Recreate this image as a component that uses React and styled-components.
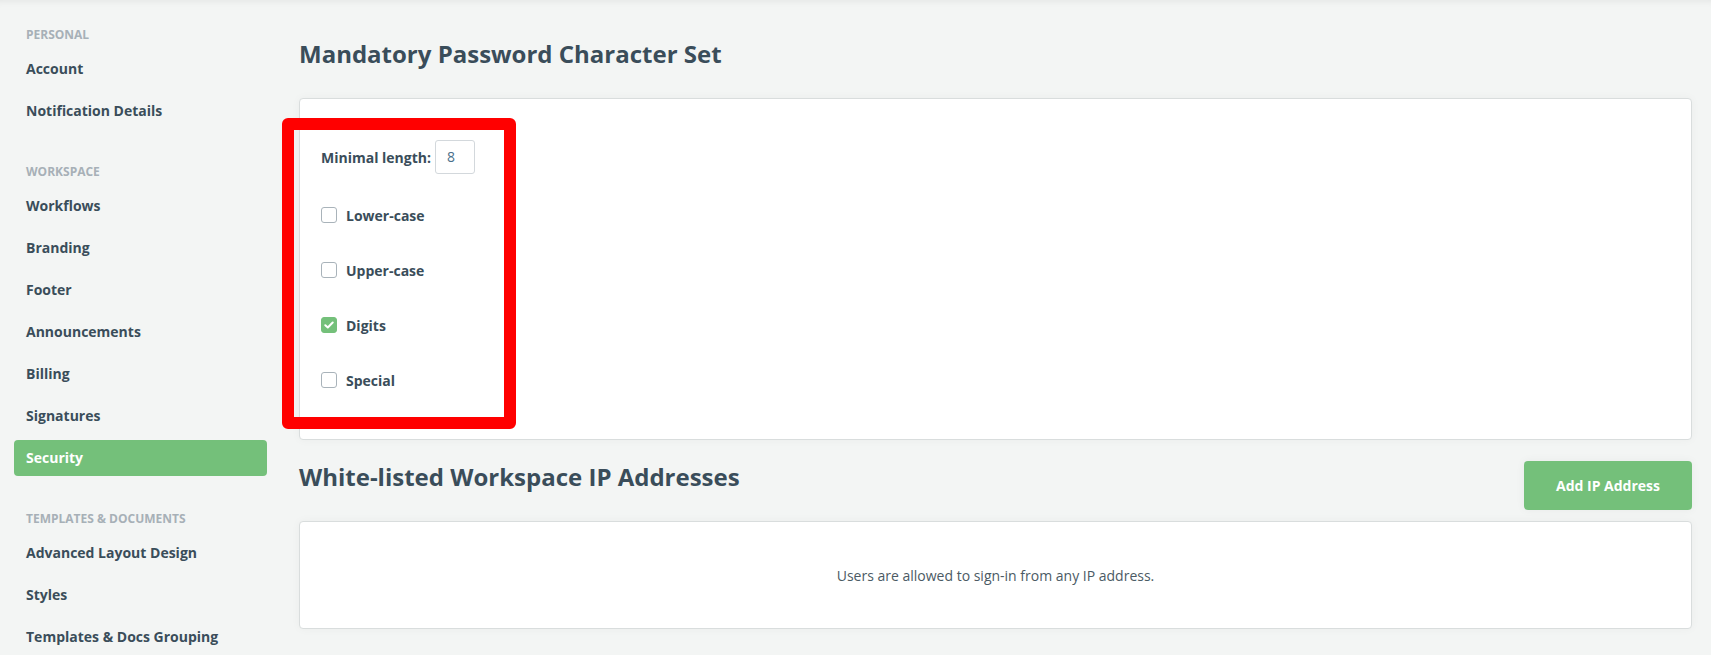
import React from "react";
import styled, { createGlobalStyle } from "styled-components";

const GlobalStyle = createGlobalStyle`
  html, body { margin: 0; padding: 0; background: #f3f5f4; }
  body { font-family: "Open Sans", "Noto Sans", sans-serif; color: #3c4f5c; }
  * { box-sizing: border-box; }
`;

const Page = styled.div`
  position: relative;
  display: flex;
  width: 1711px;
  height: 655px;
  overflow: hidden;
  background: #f3f5f4;
  box-shadow: inset 0 7px 7px -6px rgba(0, 0, 0, 0.07);
`;

const Sidebar = styled.nav`
  flex: 0 0 281px;
  padding: 27px 14px 0 14px;
  display: flex;
  flex-direction: column;
  gap: 35px;
`;

const Section = styled.div`
  display: flex;
  flex-direction: column;
`;

const SectionTitle = styled.div`
  height: 16px;
  line-height: 16px;
  padding-left: 12px;
  margin-bottom: 8px;
  font-size: 12px;
  font-weight: 700;
  text-transform: uppercase;
  color: #a7b0b7;
  white-space: nowrap;
`;

const Items = styled.div`
  display: flex;
  flex-direction: column;
  gap: 6px;
`;

const Item = styled.div`
  height: 36px;
  line-height: 36px;
  padding-left: 12px;
  font-size: 14px;
  font-weight: 700;
  border-radius: 4px;
  white-space: nowrap;
  color: ${(p) => (p.$active ? "#ffffff" : "#3a4d5a")};
  background: ${(p) => (p.$active ? "#74c07a" : "transparent")};
`;

const Main = styled.main`
  flex: 1;
  padding: 37px 19px 0 18px;
  display: flex;
  flex-direction: column;
`;

const Heading = styled.h2`
  margin: 0;
  font-size: 24px;
  line-height: 33px;
  font-weight: 700;
  color: #3a4d5a;
  white-space: nowrap;
`;

const Card = styled.div`
  background: #ffffff;
  border: 1px solid #d9dddd;
  border-radius: 4px;
  box-shadow: 0 0 10px rgba(0, 0, 0, 0.04);
`;

const PasswordCard = styled(Card)`
  margin-top: 28px;
  height: 342px;
  padding: 41px 20px 0 21px;
  display: flex;
  flex-direction: column;
`;

const LengthRow = styled.div`
  display: flex;
  align-items: center;
  height: 34px;
  gap: 4px;
`;

const Label = styled.label`
  font-size: 14px;
  font-weight: 700;
  color: #3a4d5a;
  white-space: nowrap;
`;

const NumberBox = styled.div`
  width: 40px;
  height: 34px;
  border: 1px solid #d3d8dc;
  border-radius: 3px;
  padding-left: 11px;
  line-height: 32px;
  font-size: 14px;
  color: #4a6f8a;
`;

const CheckList = styled.div`
  margin-top: 31px;
  display: flex;
  flex-direction: column;
  gap: 35px;
`;

const CheckRow = styled.div`
  display: flex;
  align-items: center;
  height: 20px;
  gap: 9px;
`;

const Box = styled.span`
  width: 16px;
  height: 16px;
  border-radius: 3px;
  display: inline-flex;
  align-items: center;
  justify-content: center;
  border: 1px solid ${(p) => (p.$checked ? "#74c07a" : "#a9b3ba")};
  background: ${(p) => (p.$checked ? "#74c07a" : "#ffffff")};
`;

const SectionHeader = styled.div`
  margin-top: 20px;
  display: flex;
  justify-content: space-between;
  align-items: flex-start;
`;

const Button = styled.button`
  width: 168px;
  height: 49px;
  margin-top: 1px;
  border: none;
  border-radius: 4px;
  background: #74c07a;
  color: #ffffff;
  font-family: "Open Sans", "Noto Sans", sans-serif;
  font-size: 14px;
  font-weight: 700;
  box-shadow: 0 0 10px rgba(0, 0, 0, 0.05);
  cursor: pointer;
`;

const IpCard = styled(Card)`
  margin-top: 11px;
  height: 108px;
  display: flex;
  align-items: center;
  justify-content: center;
  font-size: 14px;
  color: #4b5a64;
`;

const Annotation = styled.div`
  position: absolute;
  left: 282px;
  top: 118px;
  width: 234px;
  height: 311px;
  border: 12px solid #ff0000;
  border-radius: 6px;
  pointer-events: none;
`;

const Check = () => (
  <svg width="10" height="8" viewBox="0 0 10 8">
    <path d="M1.3 4.2 L3.8 6.5 L8.7 1.5" fill="none" stroke="#ffffff" strokeWidth="2" strokeLinecap="round" strokeLinejoin="round" />
  </svg>
);

const nav = [
  { title: "Personal", items: ["Account", "Notification Details"] },
  {
    title: "Workspace",
    items: ["Workflows", "Branding", "Footer", "Announcements", "Billing", "Signatures", "Security"],
  },
  { title: "Templates & Documents", items: ["Advanced Layout Design", "Styles", "Templates & Docs Grouping"] },
];

const checks = [
  { label: "Lower-case", checked: false },
  { label: "Upper-case", checked: false },
  { label: "Digits", checked: true },
  { label: "Special", checked: false },
];

export default function App() {
  return (
    <>
      <GlobalStyle />
      <Page>
        <Sidebar>
          {nav.map((s) => (
            <Section key={s.title}>
              <SectionTitle>{s.title}</SectionTitle>
              <Items>
                {s.items.map((it) => (
                  <Item key={it} $active={it === "Security"}>
                    {it}
                  </Item>
                ))}
              </Items>
            </Section>
          ))}
        </Sidebar>
        <Main>
          <Heading>Mandatory Password Character Set</Heading>
          <PasswordCard>
            <LengthRow>
              <Label>Minimal length:</Label>
              <NumberBox>8</NumberBox>
            </LengthRow>
            <CheckList>
              {checks.map((c) => (
                <CheckRow key={c.label}>
                  <Box $checked={c.checked}>{c.checked && <Check />}</Box>
                  <Label>{c.label}</Label>
                </CheckRow>
              ))}
            </CheckList>
          </PasswordCard>
          <SectionHeader>
            <Heading>White-listed Workspace IP Addresses</Heading>
            <Button>Add IP Address</Button>
          </SectionHeader>
          <IpCard>Users are allowed to sign-in from any IP address.</IpCard>
        </Main>
        <Annotation />
      </Page>
    </>
  );
}
